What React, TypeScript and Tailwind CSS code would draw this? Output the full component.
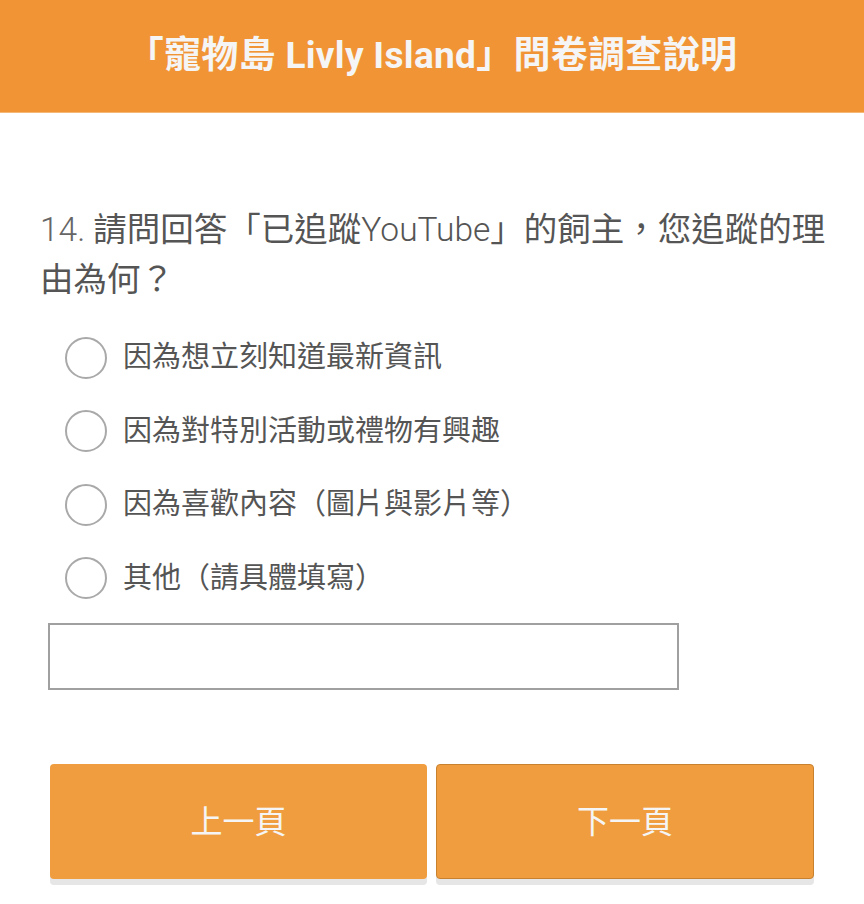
import React from "react";

const options = [
  "因為想立刻知道最新資訊",
  "因為對特別活動或禮物有興趣",
  "因為喜歡內容（圖片與影片等）",
  "其他（請具體填寫）",
];

function Radio({ label }: { label: string }) {
  return (
    <label className="flex items-center h-[73.5px] pl-[25px]">
      <span className="w-[42px] h-[42px] rounded-full border-2 border-[#a9a9a9] bg-white shrink-0" />
      <span className="ml-[16px] text-[29px] leading-none text-[#555]">{label}</span>
    </label>
  );
}

export default function App() {
  return (
    <div
      className="w-[864px] h-[904px] bg-white overflow-hidden"
      style={{ fontFamily: '"Roboto", "Noto Sans CJK TC", sans-serif' }}
    >
      <header className="h-[113px] bg-[#f19436] border-b border-[#f6b877] flex items-center justify-center">
        <h1 className="text-[37px] font-bold text-[#f5f5f5] tracking-[0.3px]">
          「寵物島 Livly Island」問卷調查說明
        </h1>
      </header>

      <main className="px-[40px]">
        <p className="mt-[92px] w-[800px] text-[33.5px] leading-[50px] text-[#555]">
          <span className="font-light text-[#666]">14. </span>
          請問回答「已追蹤<span className="font-light">YouTube</span>」的飼主，您追蹤的理由為何？
        </p>

        <div className="mt-[16px]">
          {options.map((o) => (
            <Radio key={o} label={o} />
          ))}
        </div>

        <div className="mt-[8px] ml-[8px] w-[631px] h-[67px] border-2 border-[#a0a0a0] bg-white" />

        <div className="mt-[74px] ml-[10px] flex gap-[9px]">
          <button className="w-[377px] h-[115px] rounded-[4px] bg-[#f09d3f] text-[#f5f5f5] text-[32px] shadow-[0_6px_0_#e6e6e6]">
            上一頁
          </button>
          <button className="w-[378px] h-[115px] rounded-[4px] bg-[#f09d3f] border border-[#c8822f] text-[#f5f5f5] text-[32px] shadow-[0_6px_0_#e6e6e6]">
            下一頁
          </button>
        </div>
      </main>
    </div>
  );
}
